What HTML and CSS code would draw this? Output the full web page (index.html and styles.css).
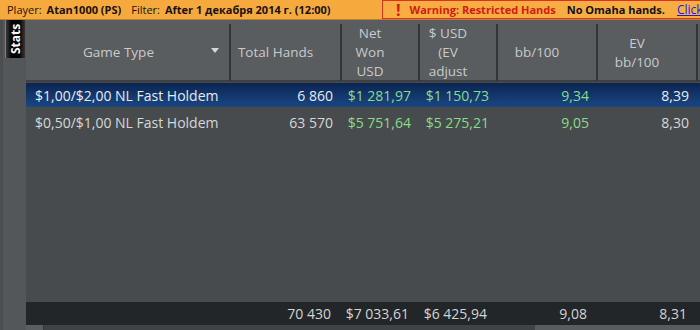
FILE: index.html
```html
<!DOCTYPE html>
<html>
<head>
<meta charset="utf-8">
<link rel="stylesheet" href="styles.css">
</head>
<body>
<div class="topbar">
  <div class="info">
    <span class="lbl">Player:</span><b>Atan1000 (PS)</b>
    <span class="lbl gap">Filter:</span><b>After 1 декабря 2014 г. (12:00)</b>
  </div>
  <div class="warning">
    <span class="bang">!</span>
    <span class="warn">Warning: Restricted Hands</span>
    <span class="omaha">No Omaha hands.</span>
    <span class="click">Click</span>
  </div>
</div>
<div class="main">
  <div class="side">
    <div class="tab">Stats</div>
  </div>
  <div class="grid">
    <div class="head">
      <div class="hc game"><span>Game Type</span><span class="arrow"></span></div>
      <div class="hc"><span>Total Hands</span></div>
      <div class="hc"><span>Net<br>Won<br>USD</span></div>
      <div class="hc"><span>$ USD<br>(EV<br>adjust</span></div>
      <div class="hc"><span>bb/100</span></div>
      <div class="hc"><span>EV<br>bb/100</span></div>
    </div>
    <div class="body">
      <div class="row sel">
        <div class="c name">$1,00/$2,00 NL Fast Holdem</div>
        <div class="c">6 860</div>
        <div class="c g">$1 281,97</div>
        <div class="c g">$1 150,73</div>
        <div class="c g">9,34</div>
        <div class="c">8,39</div>
      </div>
      <div class="row">
        <div class="c name">$0,50/$1,00 NL Fast Holdem</div>
        <div class="c">63 570</div>
        <div class="c g">$5 751,64</div>
        <div class="c g">$5 275,21</div>
        <div class="c g">9,05</div>
        <div class="c">8,30</div>
      </div>
    </div>
    <div class="foot">
      <div class="c name"></div>
      <div class="c">70 430</div>
      <div class="c">$7 033,61</div>
      <div class="c">$6 425,94</div>
      <div class="c">9,08</div>
      <div class="c">8,31</div>
    </div>
    <div class="scroll">
      <div class="s1"></div>
      <div class="s2"></div>
      <div class="s3"></div>
    </div>
  </div>
</div>
</body>
</html>
```
FILE: styles.css
```css
* { box-sizing: border-box; }
html, body { margin: 0; padding: 0; }
body {
  width: 700px;
  height: 330px;
  overflow: hidden;
  background: #4f5356;
  font-family: "Open Sans", "Noto Sans", sans-serif;
}
.topbar {
  height: 20px;
  background: #f6aa3e;
  border-bottom: 1px solid #b88030;
  display: flex;
  align-items: stretch;
  font-size: 11px;
  white-space: nowrap;
  overflow: hidden;
}
.info {
  flex: 0 0 382px;
  padding-left: 7px;
  display: flex;
  align-items: center;
  color: #1a1208;
}
.info .lbl { margin-right: 5px; }
.info .gap { margin-left: 10px; }
.info b { font-weight: 700; }
.warning {
  flex: 1;
  min-width: 0;
  overflow: hidden;
  border: 1px solid #d8322a;
  border-right: none;
  height: 19px;
  display: flex;
  align-items: center;
  padding-left: 13px;
  background: #f7ad42;
  font-weight: 700;
}
.bang {
  color: #e01515;
  font-size: 16px;
  font-weight: 700;
  margin-right: 9px;
  line-height: 1;
}
.warn { color: #d41a12; margin-right: 11px; }
.omaha { color: #111; margin-right: 12px; }
.click { color: #1a1aee; text-decoration: underline; font-weight: 400; font-size: 12px; }

.main {
  display: flex;
  height: 310px;
}
.side {
  width: 26px;
  background: #53575a;
  border-left: 3px solid #4a4e51;
  padding-left: 2px;
}
.tab {
  width: 20px;
  height: 38px;
  writing-mode: vertical-rl;
  transform: rotate(180deg);
  background: linear-gradient(to right, #3a3a3a, #000 30%, #000 70%, #3a3a3a);
  color: #fff;
  font-weight: 700;
  font-size: 12px;
  display: flex;
  align-items: center;
  justify-content: center;
  border-right: 1px solid #7a7e80;
}
.grid {
  flex: 1;
  display: flex;
  flex-direction: column;
  background: #474b4e;
}
.head, .row, .foot {
  display: grid;
  grid-template-columns: 205px 111px 78px 78px 100px 100px 1fr;
}
.head {
  height: 62px;
  background: #5a5d60;
  border-bottom: 2px solid #3e4144;
  color: #c8cacb;
  font-size: 13.5px;
  line-height: 19px;
}
.hc {
  margin: 4px 0 3px;
  border-right: 2px solid #333639;
  display: flex;
  align-items: center;
  justify-content: center;
  text-align: center;
  padding-right: 20px;
}
.hc.game { position: relative; padding-right: 18px; }
.arrow {
  position: absolute;
  right: 10px;
  top: 24px;
  width: 0;
  height: 0;
  border-left: 4px solid transparent;
  border-right: 4px solid transparent;
  border-top: 5px solid #d4d6d7;
}
.body { flex: 1; padding-top: 1px; }
.row {
  height: 26px;
  color: #d6d7d8;
  font-size: 14px;
  align-items: center;
}
.row.sel {
  height: 24px;
  margin-bottom: 2px;
  background: linear-gradient(to bottom, #0a2452, #153a70 60%, #1b4582);
  color: #e6ebf2;
}
.c {
  text-align: right;
  padding-right: 9px;
  white-space: nowrap;
}
.c.name { text-align: left; padding-left: 9px; }
.g { color: #88dc88; }
.foot {
  height: 23px;
  background: #232628;
  color: #d2d4d5;
  font-size: 14px;
  align-items: center;
}
.foot .c { padding-right: 11px; }
.scroll {
  height: 5px;
  display: flex;
}
.s1 { width: 18px; background: #5a5e61; border-right: 1px solid #35383a; }
.s2 { width: 491px; background: #3f4346; }
.s3 { flex: 1; background: #585c5f; }
```
